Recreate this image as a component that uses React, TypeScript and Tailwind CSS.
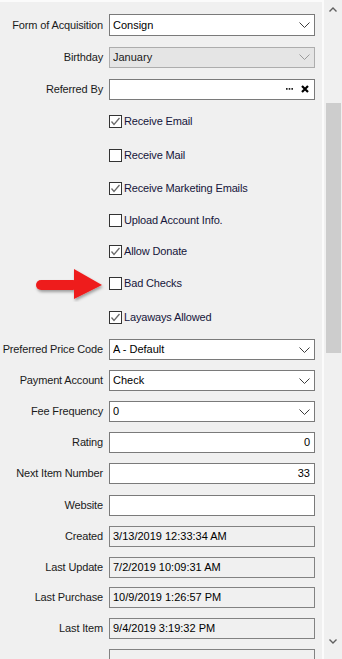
import type { ReactNode } from 'react';

const FONT = '"Liberation Sans", Arial, sans-serif';

// 下拉箭头
function Chevron({ color = '#3c3c3c' }: { color?: string }) {
  return (
    <svg width="11" height="6" viewBox="0 0 11 6" className="shrink-0">
      <polyline points="0.5,0.5 5.5,5.5 10.5,0.5" fill="none" stroke={color} strokeWidth="1" />
    </svg>
  );
}

function Row({ label, h, children }: { label?: string; h: string; children: ReactNode }) {
  return (
    <div className={`flex items-center ${h}`}>
      <div className="w-[104px] shrink-0 flex justify-end whitespace-nowrap text-[11px] tracking-[-0.15px] text-[#1a1a1a] pr-[1px]">
        {label}
      </div>
      <div className="ml-[5px]">{children}</div>
    </div>
  );
}

function Combo({ value, disabled = false, tall = false }: { value: string; disabled?: boolean; tall?: boolean }) {
  return (
    <div
      className={
        'flex items-center w-[206px] pl-[3px] pr-[4px] border text-[11px] ' +
        (tall ? 'h-[22px] ' : 'h-[21px] ') +
        (disabled ? 'bg-[#e5e5e5] border-[#adadad] text-[#1a1a1a]' : 'bg-white border-[#7a7a7a] text-black')
      }
    >
      <span className="flex-1 truncate">{value}</span>
      <Chevron color={disabled ? '#9a9a9a' : '#3c3c3c'} />
    </div>
  );
}

function TextBox({ value = '', right = false, readOnly = false }: { value?: string; right?: boolean; readOnly?: boolean }) {
  return (
    <div
      className={
        'flex items-center w-[206px] h-[21px] pl-[3px] pr-[4px] border text-[11px] text-black ' +
        (right ? 'justify-end ' : '') +
        (readOnly ? 'bg-[#f0f0f0] border-[#828282]' : 'bg-white border-[#7a7a7a]')
      }
    >
      {value}
    </div>
  );
}

function Check({ label, checked = false, h }: { label: string; checked?: boolean; h: string }) {
  return (
    <div className={`flex items-center pl-[109px] ${h}`}>
      <div className="w-[13px] h-[13px] border border-[#333] bg-white flex items-center justify-center shrink-0">
        {checked && (
          <svg width="11" height="11" viewBox="0 0 11 11">
            <polyline points="1.5,5.5 4,8.5 9.5,2" fill="none" stroke="#6a6a6a" strokeWidth="1.3" />
          </svg>
        )}
      </div>
      <span className="ml-[2px] text-[11px] tracking-[-0.15px] text-[#15153a]">{label}</span>
    </div>
  );
}

function RedArrow() {
  return (
    <svg width="72" height="34" viewBox="0 0 72 34" className="absolute left-[34px] top-[266px]">
      <defs>
        <filter id="sh" x="-20%" y="-30%" width="140%" height="160%">
          <feDropShadow dx="1" dy="2" stdDeviation="1.5" floodColor="#000" floodOpacity="0.35" />
        </filter>
      </defs>
      <g filter="url(#sh)">
        <rect x="2" y="12" width="42" height="10" rx="5" fill="#ee1c1c" />
        <polygon points="40,1 68,17 40,31" fill="#ee1c1c" />
      </g>
    </svg>
  );
}

function Scrollbar() {
  return (
    <div className="w-[18px] h-full bg-[#f0f0f0] flex flex-col items-center">
      <div className="h-[17px] flex items-center justify-center pt-[2px]">
        <svg width="8" height="5" viewBox="0 0 8 5">
          <polyline points="0.5,4.5 4,1 7.5,4.5" fill="none" stroke="#606060" strokeWidth="1.4" />
        </svg>
      </div>
      <div className="mt-[86px] w-[15px] h-[250px] bg-[#cdcdcd]" />
      <div className="flex-1" />
      <div className="h-[20px] flex items-start justify-center">
        <svg width="8" height="5" viewBox="0 0 8 5">
          <polyline points="0.5,0.5 4,4 7.5,0.5" fill="none" stroke="#606060" strokeWidth="1.4" />
        </svg>
      </div>
    </div>
  );
}

export default function App() {
  return (
    <div className="w-[342px] h-[659px] overflow-hidden bg-[#f0f0f0] flex" style={{ fontFamily: FONT }}>
      <div className="relative w-[324px] h-full border-t-2 border-r-2 border-[#fbfbfb]">
        <div className="pt-[7px]">
          <Row label="Form of Acquisition" h="h-[32px]">
            <Combo value="Consign" tall />
          </Row>
          <Row label="Birthday" h="h-[32px]">
            <Combo value="January" disabled />
          </Row>
          <Row label="Referred By" h="h-[32px]">
            <div className="flex items-center justify-end w-[206px] h-[21px] pr-[5px] border border-[#7a7a7a] bg-white">
              <svg width="7" height="2" viewBox="0 0 7 2" className="mr-[8px]">
                <rect x="0" y="0" width="1.6" height="1.8" fill="#222" />
                <rect x="2.7" y="0" width="1.6" height="1.8" fill="#222" />
                <rect x="5.4" y="0" width="1.6" height="1.8" fill="#222" />
              </svg>
              <svg width="8" height="8" viewBox="0 0 8 8">
                <path d="M1 1 L7 7 M7 1 L1 7" stroke="#000" strokeWidth="2.2" />
              </svg>
            </div>
          </Row>
          <Check label="Receive Email" checked h="h-[33px]" />
          <Check label="Receive Mail" h="h-[34px]" />
          <Check label="Receive Marketing Emails" checked h="h-[33px]" />
          <Check label="Upload Account Info." h="h-[30px]" />
          <Check label="Allow Donate" checked h="h-[32px]" />
          <Check label="Bad Checks" h="h-[33px]" />
          <Check label="Layaways Allowed" checked h="h-[34px]" />
          <Row label="Preferred Price Code" h="h-[31px]">
            <Combo value="A - Default" />
          </Row>
          <Row label="Payment Account" h="h-[31px]">
            <Combo value="Check" />
          </Row>
          <Row label="Fee Frequency" h="h-[31px]">
            <Combo value="0" />
          </Row>
          <Row label="Rating" h="h-[31px]">
            <TextBox value="0" right />
          </Row>
          <Row label="Next Item Number" h="h-[31px]">
            <TextBox value="33" right />
          </Row>
          <Row label="Website" h="h-[32px]">
            <TextBox />
          </Row>
          <Row label="Created" h="h-[31px]">
            <TextBox value="3/13/2019 12:33:34 AM" readOnly />
          </Row>
          <Row label="Last Update" h="h-[30px]">
            <TextBox value="7/2/2019 10:09:31 AM" readOnly />
          </Row>
          <Row label="Last Purchase" h="h-[31px]">
            <TextBox value="10/9/2019 1:26:57 PM" readOnly />
          </Row>
          <Row label="Last Item" h="h-[31px]">
            <TextBox value="9/4/2019 3:19:32 PM" readOnly />
          </Row>
          <Row h="h-[31px]">
            <TextBox readOnly />
          </Row>
        </div>
        <RedArrow />
      </div>
      <Scrollbar />
    </div>
  );
}
